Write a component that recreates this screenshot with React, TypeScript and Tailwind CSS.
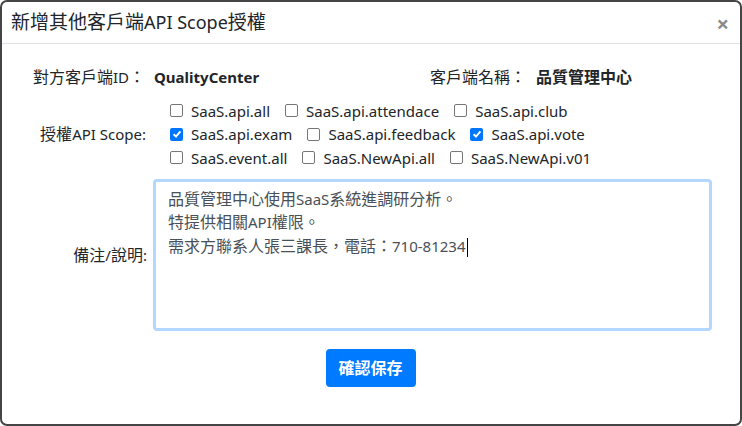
const font = "font-['Segoe_UI','Noto_Sans','Noto_Sans_CJK_TC',sans-serif]"

const scopes = [
  [
    { name: 'SaaS.api.all', checked: false },
    { name: 'SaaS.api.attendace', checked: false },
    { name: 'SaaS.api.club', checked: false },
  ],
  [
    { name: 'SaaS.api.exam', checked: true },
    { name: 'SaaS.api.feedback', checked: false },
    { name: 'SaaS.api.vote', checked: true },
  ],
  [
    { name: 'SaaS.event.all', checked: false },
    { name: 'SaaS.NewApi.all', checked: false },
    { name: 'SaaS.NewApi.v01', checked: false },
  ],
]

// CJK glyphs run a bit larger than the latin ones in the original (JhengHei + Segoe)
function Mix({ text, cjk = 'text-[16px]' }: { text: string; cjk?: string }) {
  const parts = text.split(/([\u3000-\u9fff\uff00-\uffef]+)/)
  return (
    <>
      {parts.map((p, i) =>
        i % 2 === 1 ? (
          <span key={i} className={cjk}>
            {p}
          </span>
        ) : (
          p
        ),
      )}
    </>
  )
}

function Box({ checked }: { checked: boolean }) {
  if (checked) {
    return (
      <span className="flex h-[13px] w-[13px] items-center justify-center rounded-[2px] bg-[#0075ff]">
        <svg width="10" height="10" viewBox="0 0 10 10">
          <path d="M1.6 5.2 L4 7.5 L8.4 2.3" fill="none" stroke="white" strokeWidth="1.9" />
        </svg>
      </span>
    )
  }
  return <span className="h-[13px] w-[13px] rounded-[2px] border border-[#767676] bg-white" />
}

export default function App() {
  return (
    <div className={`h-[426px] w-[742px] bg-white ${font} text-[#212529]`}>
      <div className="flex h-full flex-col rounded-[7px] border-2 border-[#454545]">
        <div className="flex h-[42px] items-center justify-between border-b border-[#dee2e6] pl-[9px] pr-[11px]">
          <h1 className="text-[18px] leading-none">
            <Mix text="新增其他客戶端API Scope授權" cjk="text-[19px]" />
          </h1>
          <span className="text-[22px] font-bold leading-none text-[#8a8a8a]">×</span>
        </div>

        <div className="flex items-center pt-[21px] text-[15px] leading-[24px]">
          <span className="w-[146px] pl-[31px]">
            <Mix text="對方客戶端ID：" />
          </span>
          <span className="ml-[6px] w-[276px] font-bold">QualityCenter</span>
          <span className="w-[106px]">
            <Mix text="客戶端名稱：" />
          </span>
          <span className="text-[16px] font-bold">品質管理中心</span>
        </div>

        <div className="mt-[10px] flex items-center text-[15px]">
          <span className="w-[144px] text-right">
            <Mix text="授權API Scope:" />
          </span>
          <div className="ml-[24px] flex flex-col">
            {scopes.map((row, i) => (
              <div key={i} className="flex h-[23.5px] items-center gap-[15px]">
                {row.map((s) => (
                  <label key={s.name} className="flex items-center gap-[8px]">
                    <Box checked={s.checked} />
                    <span>{s.name}</span>
                  </label>
                ))}
              </div>
            ))}
          </div>
        </div>

        <div className="mt-[9px] flex items-center text-[15px]">
          <span className="w-[145px] text-right">
            <Mix text="備注/說明:" />
          </span>
          <div className="ml-[6px] h-[152px] w-[559px] rounded-[4px] border-[3px] border-[#b3d7ff] px-[12px] pt-[6px] leading-[23.5px] text-[#495057]">
            <div className="h-full">
              <Mix text="品質管理中心使用SaaS系統進調研分析。" />
              <br />
              <Mix text="特提供相關API權限。" />
              <br />
              <Mix text="需求方聯系人張三課長，電話：710-81234" />
              <span className="ml-[1px] inline-block h-[19px] w-px bg-black align-middle" />
            </div>
          </div>
        </div>

        <div className="mt-[18px] flex justify-center pr-[1px]">
          <button className="h-[38px] w-[90px] rounded-[4px] bg-[#007bff] text-[16px] font-bold text-white">
            確認保存
          </button>
        </div>
      </div>
    </div>
  )
}
